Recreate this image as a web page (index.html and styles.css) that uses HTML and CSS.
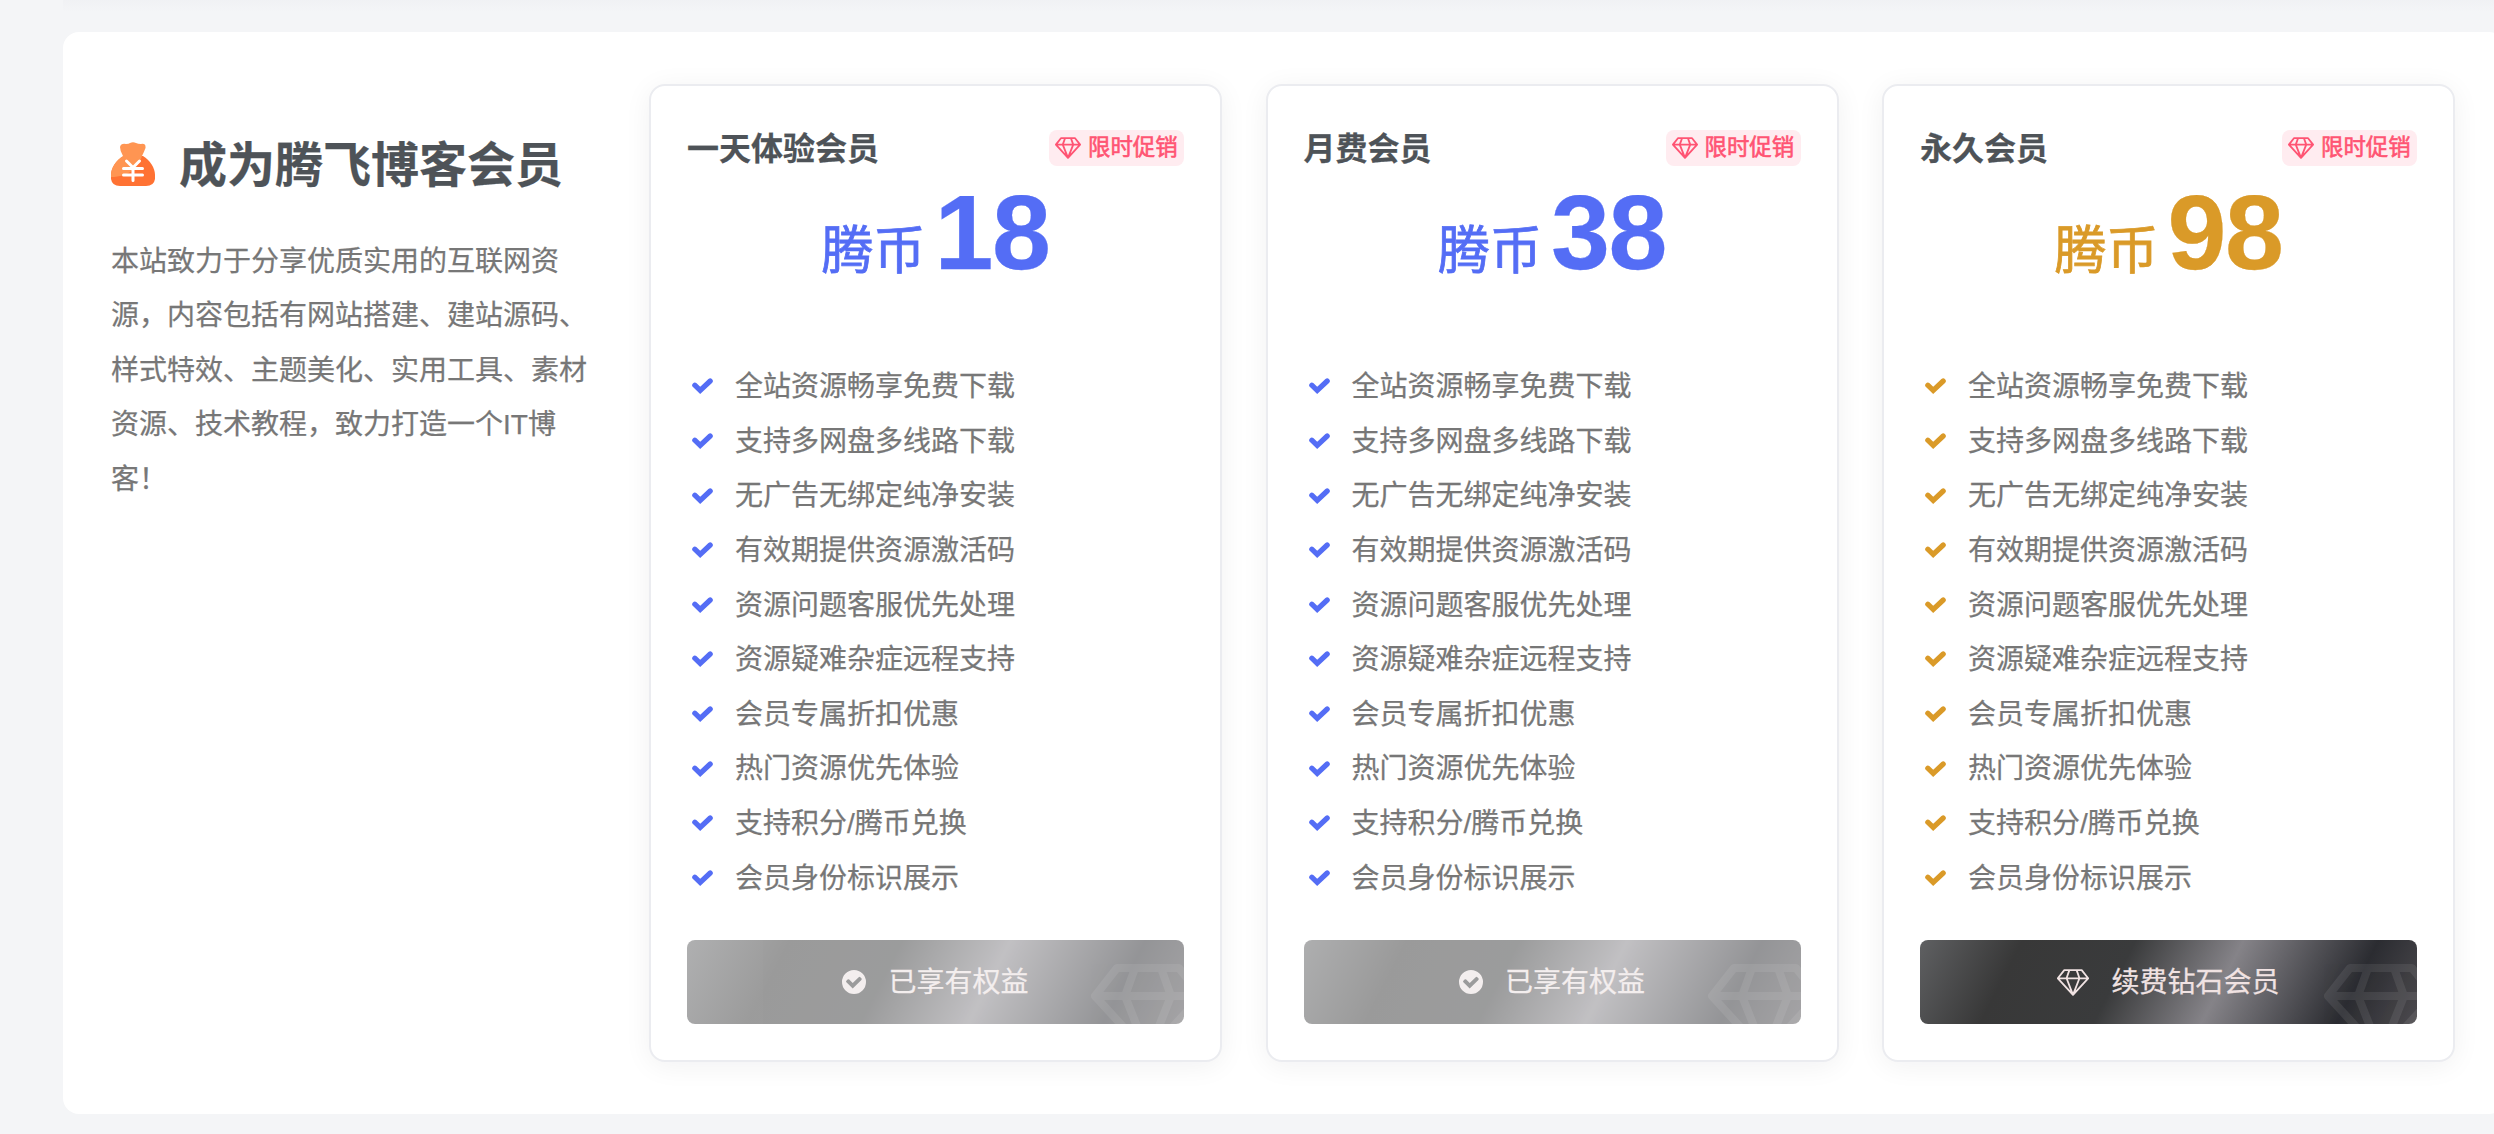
FILE: index.html
```html
<!DOCTYPE html>
<html lang="zh-CN">
<head>
<meta charset="utf-8">
<title>成为腾飞博客会员</title>
<link rel="stylesheet" href="styles.css">
</head>
<body>
<svg class="sprite" aria-hidden="true">
  <symbol id="diamond" viewBox="4 4 114 94">
    <path d="M30 8H92L114 36L61 94L8 36ZM8 36H114M48 8L38 36L61 94L84 36L74 8" fill="none" stroke="currentColor" stroke-width="8" stroke-linejoin="round"/>
  </symbol>
  <symbol id="diamond-thin" viewBox="4 4 114 94">
    <path d="M30 7H92L115 36L61 95L7 36ZM7 36H115M48 7L38 36L61 95L84 36L74 7" fill="none" stroke="currentColor" stroke-width="6.500" stroke-linejoin="round"/>
  </symbol>
  <symbol id="check" viewBox="0 0 21 16">
    <path d="M2.8 7.200L8.200 12.400L18.200 3" fill="none" stroke="currentColor" stroke-width="5.200" stroke-linejoin="miter" stroke-linecap="round"/>
  </symbol>
  <symbol id="check-circle" viewBox="0 0 24 24">
    <path fill="currentColor" fill-rule="evenodd" d="M12 0a12 12 0 1 0 0 24a12 12 0 1 0 0-24ZM10.7 18.6L4.4 12.3Q3.6 11.5 4.4 10.7L5.6 9.6Q6.4 8.9 7.2 9.6L10.7 13L16.7 7.2Q17.5 6.5 18.3 7.2L19.4 8.3Q20.1 9.1 19.4 9.9Z"/>
  </symbol>
</svg>
<div class="top-shade"></div>
<main class="panel">
  <section class="intro">
    <h1 class="intro-title">
      <svg class="bag" viewBox="0 0 44 44">
        <path fill="#ff7233" d="M13 14H32C39 18 44 26 44 33V37Q43 44 35 44H9Q1 44 0 37V33C0 26 5 18 13 14Z"/>
        <path fill="#ff9552" d="M0 35V33C0 26 5 18 12 14Q9 9 9 5Q10 1 15 2Q18 2 19 1Q22-.4 25 1Q27 2 30 2Q35 1 34.500 6Q33 10 31 14C27 26 18 35 0 35Z"/>
        <path d="M15.500 19L22 25.500L28.500 19M12.500 26.500H31.500M12.500 33H31.500M22 26V38.500" fill="none" stroke="#fff" stroke-width="3" stroke-linecap="round"/>
      </svg>
      <span>成为腾飞博客会员</span>
    </h1>
    <p class="intro-text">本站致力于分享优质实用的互联网资源，内容包括有网站搭建、建站源码、样式特效、主题美化、实用工具、素材资源、技术教程，致力打造一个IT博客！</p>
  </section>

  <article class="card">
    <header class="card-head"><h2>一天体验会员</h2><span class="badge"><svg><use href="#diamond"/></svg>限时促销</span></header>
    <div class="price"><span class="unit">腾币</span><strong>18</strong></div>
    <ul class="perks">
      <li><svg><use href="#check"/></svg>全站资源畅享免费下载</li>
      <li><svg><use href="#check"/></svg>支持多网盘多线路下载</li>
      <li><svg><use href="#check"/></svg>无广告无绑定纯净安装</li>
      <li><svg><use href="#check"/></svg>有效期提供资源激活码</li>
      <li><svg><use href="#check"/></svg>资源问题客服优先处理</li>
      <li><svg><use href="#check"/></svg>资源疑难杂症远程支持</li>
      <li><svg><use href="#check"/></svg>会员专属折扣优惠</li>
      <li><svg><use href="#check"/></svg>热门资源优先体验</li>
      <li><svg><use href="#check"/></svg>支持积分/腾币兑换</li>
      <li><svg><use href="#check"/></svg>会员身份标识展示</li>
    </ul>
    <button class="buy owned" type="button"><svg class="round"><use href="#check-circle"/></svg><span>已享有权益</span><svg class="mark"><use href="#diamond"/></svg></button>
  </article>

  <article class="card">
    <header class="card-head"><h2>月费会员</h2><span class="badge"><svg><use href="#diamond"/></svg>限时促销</span></header>
    <div class="price"><span class="unit">腾币</span><strong>38</strong></div>
    <ul class="perks">
      <li><svg><use href="#check"/></svg>全站资源畅享免费下载</li>
      <li><svg><use href="#check"/></svg>支持多网盘多线路下载</li>
      <li><svg><use href="#check"/></svg>无广告无绑定纯净安装</li>
      <li><svg><use href="#check"/></svg>有效期提供资源激活码</li>
      <li><svg><use href="#check"/></svg>资源问题客服优先处理</li>
      <li><svg><use href="#check"/></svg>资源疑难杂症远程支持</li>
      <li><svg><use href="#check"/></svg>会员专属折扣优惠</li>
      <li><svg><use href="#check"/></svg>热门资源优先体验</li>
      <li><svg><use href="#check"/></svg>支持积分/腾币兑换</li>
      <li><svg><use href="#check"/></svg>会员身份标识展示</li>
    </ul>
    <button class="buy owned" type="button"><svg class="round"><use href="#check-circle"/></svg><span>已享有权益</span><svg class="mark"><use href="#diamond"/></svg></button>
  </article>

  <article class="card gold">
    <header class="card-head"><h2>永久会员</h2><span class="badge"><svg><use href="#diamond"/></svg>限时促销</span></header>
    <div class="price"><span class="unit">腾币</span><strong>98</strong></div>
    <ul class="perks">
      <li><svg><use href="#check"/></svg>全站资源畅享免费下载</li>
      <li><svg><use href="#check"/></svg>支持多网盘多线路下载</li>
      <li><svg><use href="#check"/></svg>无广告无绑定纯净安装</li>
      <li><svg><use href="#check"/></svg>有效期提供资源激活码</li>
      <li><svg><use href="#check"/></svg>资源问题客服优先处理</li>
      <li><svg><use href="#check"/></svg>资源疑难杂症远程支持</li>
      <li><svg><use href="#check"/></svg>会员专属折扣优惠</li>
      <li><svg><use href="#check"/></svg>热门资源优先体验</li>
      <li><svg><use href="#check"/></svg>支持积分/腾币兑换</li>
      <li><svg><use href="#check"/></svg>会员身份标识展示</li>
    </ul>
    <button class="buy" type="button"><svg class="gem"><use href="#diamond-thin"/></svg><span>续费钻石会员</span><svg class="mark"><use href="#diamond"/></svg></button>
  </article>
</main>
</body>
</html>
```
FILE: styles.css
```css
* { box-sizing: border-box; }

html, body { height: 100%; }

body {
  margin: 0;
  overflow: hidden;
  background: #f4f5f7;
  color: #777;
  font: 28px/54.6px "Liberation Sans", "Noto Sans CJK SC", sans-serif;
  -webkit-text-stroke: .25px currentColor;
}

h1, h2, p, ul { margin: 0; padding: 0; }

.sprite { display: none; }

.top-shade {
  height: 32px;
  margin-left: 63px;
  background: linear-gradient(rgba(90, 90, 120, .025), transparent 12px);
}

.panel {
  display: flex;
  gap: 43.5px;
  width: 2442px;
  height: 1082px;
  margin-left: 63px;
  padding: 52px 50px 52px 48px;
  border-radius: 16px;
  background: #fff;
}

.intro {
  flex: none;
  width: 494.5px;
  padding-top: 50px;
}

.intro-title {
  display: flex;
  align-items: center;
  gap: 24px;
  height: 60px;
  color: #4e5358;
  font-size: 48px;
  line-height: 60px;
}

.intro-title span { padding-top: 3px; }

.bag {
  width: 44px;
  height: 44px;
}

.intro-text {
  width: 480px;
  margin-top: 40.7px;
}

.card {
  flex: none;
  display: flex;
  flex-direction: column;
  width: 573px;
  height: 978px;
  padding: 36px;
  border: 2px solid #ebecf0;
  border-radius: 16px;
  background: #fff;
  box-shadow: 0 4px 28px rgba(0, 10, 30, .06);
  color: #546df5;
}

.card-head {
  display: flex;
  align-items: center;
  justify-content: space-between;
  height: 52px;
}

.card-head h2 {
  padding-top: 1px;
  color: #4e5358;
  font-size: 32px;
  line-height: 52px;
}

.badge {
  display: flex;
  align-items: center;
  gap: 7px;
  width: 135px;
  height: 36px;
  padding-left: 6px;
  border-radius: 8px;
  background: #ffecf0;
  color: #ff5473;
  font-size: 22.4px;
  line-height: 38px;
  -webkit-text-stroke-width: .6px;
}

.badge svg {
  width: 26px;
  height: 22px;
}

.price {
  display: flex;
  align-items: baseline;
  justify-content: center;
  gap: 9px;
  height: 184.7px;
  padding-top: 6px;
  line-height: 104px;
}

.unit {
  font-size: 52px;
  -webkit-text-stroke-width: .8px;
}

.price strong {
  font-size: 106px;
  letter-spacing: -1.5px;
}

.perks { list-style: none; }

.perks li {
  display: flex;
  align-items: center;
  height: 54.6px;
  padding-top: 3px;
  color: #777;
}

.perks svg {
  width: 21px;
  height: 16px;
  margin: 0 22px 2px 5px;
  color: #546df5;
}

.gold .price, .gold .perks svg { color: #da9a28; }

.buy {
  position: relative;
  display: flex;
  align-items: center;
  justify-content: center;
  gap: 22px;
  height: 84px;
  margin-top: auto;
  padding: 0;
  overflow: hidden;
  border: 0;
  border-radius: 8px;
  background: linear-gradient(117deg, #5f6062, #383838 19%, #3a3b3c 40%, #858388 60%, #2b2c31 85%, #4d4b4f);
  color: #f0e2e2;
  font: inherit;
}

.buy span { padding-top: 3px; }

.owned { opacity: .5; color: #e8dede; }

.round { width: 24px; height: 24px; }

.gem { width: 32px; height: 27px; }

.mark {
  position: absolute;
  top: 24px;
  left: 404px;
  width: 114px;
  height: 94px;
  color: #fff;
  opacity: .08;
}
```
